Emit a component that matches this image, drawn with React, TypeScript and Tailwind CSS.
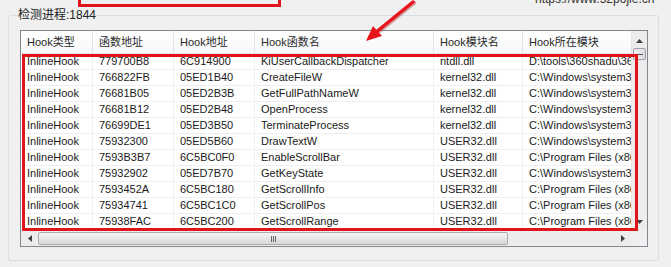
import React from "react";

const rows: string[][] = [
  ["InlineHook", "779700B8", "6C914900", "KiUserCallbackDispatcher", "ntdll.dll", "D:\\tools\\360shadu\\360safe"],
  ["InlineHook", "766822FB", "05ED1B40", "CreateFileW", "kernel32.dll", "C:\\Windows\\system32"],
  ["InlineHook", "76681B05", "05ED2B3B", "GetFullPathNameW", "kernel32.dll", "C:\\Windows\\system32"],
  ["InlineHook", "76681B12", "05ED2B48", "OpenProcess", "kernel32.dll", "C:\\Windows\\system32"],
  ["InlineHook", "76699DE1", "05ED3B50", "TerminateProcess", "kernel32.dll", "C:\\Windows\\system32"],
  ["InlineHook", "75932300", "05ED5B60", "DrawTextW", "USER32.dll", "C:\\Windows\\system32"],
  ["InlineHook", "7593B3B7", "6C5BC0F0", "EnableScrollBar", "USER32.dll", "C:\\Program Files (x86)"],
  ["InlineHook", "75932902", "05ED7B70", "GetKeyState", "USER32.dll", "C:\\Windows\\system32"],
  ["InlineHook", "7593452A", "6C5BC180", "GetScrollInfo", "USER32.dll", "C:\\Program Files (x86)"],
  ["InlineHook", "75934741", "6C5BC1C0", "GetScrollPos", "USER32.dll", "C:\\Program Files (x86)"],
  ["InlineHook", "75938FAC", "6C5BC200", "GetScrollRange", "USER32.dll", "C:\\Program Files (x86)"],
];

const headers = ["Hook类型", "函数地址", "Hook地址", "Hook函数名", "Hook模块名", "Hook所在模块"];
const widths = ["w-[72px]", "w-[81px]", "w-[81px]", "w-[179px]", "w-[89px]", "w-[108px]"];

const font = { fontFamily: '"Liberation Sans", "Noto Sans CJK SC", Arial, sans-serif' };

function Tri({ dir }: { dir: "up" | "down" | "left" | "right" }) {
  const pts =
    dir === "up"
      ? "0,4 7,4 3.5,0"
      : dir === "down"
      ? "0,0 7,0 3.5,4"
      : dir === "left"
      ? "4,0 4,7 0,3.5"
      : "0,0 0,7 4,3.5";
  const w = dir === "up" || dir === "down" ? 7 : 4;
  const h = dir === "up" || dir === "down" ? 4 : 7;
  return (
    <svg width={w} height={h} viewBox={`0 0 ${w} ${h}`}>
      <polygon points={pts} fill="#404040" />
    </svg>
  );
}

export default function App() {
  return (
    <div
      className="relative w-[671px] h-[267px] bg-[#f0f0f0] overflow-hidden text-[#1a1a1a]"
      style={font}
    >
      {/* group box */}
      <fieldset className="mt-[8px] ml-[8px] mr-[12px] border border-[#d5dfe5] rounded-[3px] p-0">
        <legend className="ml-[9px] p-0 text-[12px] leading-[14px] text-[#222]">检测进程:1844</legend>
        <div className="pl-[11px] pr-[10px] pt-[8px] pb-[13px]">
          {/* list view */}
          <div className="w-[628px] border border-[#828790] bg-white flex flex-col">
            <div className="flex">
              <div className="w-[610px] overflow-hidden">
                {/* header */}
                <div className="flex h-[23px] bg-gradient-to-b from-white to-[#f7f8fa] border-b border-[#e5e5e5] text-[11px] text-[#2a2a2a]">
                  {headers.map((h, i) => (
                    <div
                      key={i}
                      className={`${widths[i]} shrink-0 flex items-center pl-[6px] whitespace-nowrap ${
                        i < 5 ? "border-r border-[#e3e4e8]" : ""
                      }`}
                    >
                      {h}
                    </div>
                  ))}
                </div>
                {/* rows */}
                {rows.map((r, ri) => (
                  <div key={ri} className="flex h-[16px] border-b border-[#efefef] text-[11px] leading-[15px]">
                    {r.map((c, ci) => (
                      <div
                        key={ci}
                        className={`${widths[ci]} shrink-0 pl-[6px] whitespace-nowrap overflow-hidden ${
                          ci < 5 ? "border-r border-[#efefef]" : ""
                        }`}
                      >
                        {c}
                      </div>
                    ))}
                  </div>
                ))}
              </div>
              {/* vertical scrollbar */}
              <div className="w-[16px] flex flex-col bg-[#ececec] border-l border-[#e4e4e4]">
                <div className="h-[17px] flex items-center justify-center pt-[2px]">
                  <Tri dir="up" />
                </div>
                <div className="mx-[1px] h-[12px] rounded-[2px] border border-[#9da0a6] bg-gradient-to-r from-[#f2f2f2] to-[#dadada] flex flex-col items-center justify-center gap-[1px]">
                  <div className="w-[6px] h-[1px] bg-[#555]" />
                </div>
                <div className="flex-1" />
                <div className="h-[16px] flex items-center justify-center">
                  <Tri dir="down" />
                </div>
              </div>
            </div>
            <div className="flex h-[16px]">
              {/* horizontal scrollbar */}
              <div className="w-[610px] flex bg-[#ececec] border-t border-[#e4e4e4]">
                <div className="w-[17px] flex items-center justify-center">
                  <Tri dir="left" />
                </div>
                <div className="w-[470px] my-[1px] rounded-[2px] border border-[#a8abb0] bg-gradient-to-b from-[#f4f4f4] to-[#d9d9d9] flex items-center justify-center gap-[1px]">
                  <div className="w-[1px] h-[6px] bg-[#666]" />
                  <div className="w-[1px] h-[6px] bg-[#666]" />
                  <div className="w-[1px] h-[6px] bg-[#666]" />
                </div>
                <div className="flex-1" />
                <div className="w-[16px] flex items-center justify-center">
                  <Tri dir="right" />
                </div>
              </div>
              <div className="w-[16px] bg-[#f0f0f0]" />
            </div>
          </div>
        </div>
      </fieldset>

      {/* annotations */}
      <div className="absolute left-[78px] top-[-20px] w-[203px] h-[27px] border-[3px] border-[#e0151c]" />
      <div
        className="absolute left-[535px] top-[-8px] text-[12px] leading-[14px] text-[#333] whitespace-nowrap"
      >
        https://www.52pojie.cn
      </div>
      <div className="absolute left-[22px] top-[54px] w-[616px] h-[177px] border-[3px] border-[#e0151c]" />
      <svg className="absolute left-0 top-0" width="671" height="60" viewBox="0 0 671 60">
        <line x1="414" y1="3" x2="376" y2="34" stroke="#9a1010" strokeWidth="4" strokeLinecap="round" opacity="0.35" />
        <line x1="413" y1="2" x2="375" y2="33" stroke="#e8141b" strokeWidth="3.5" strokeLinecap="round" />
        <polygon points="366,41 382,36 373,26" fill="#e8141b" />
      </svg>
    </div>
  );
}
